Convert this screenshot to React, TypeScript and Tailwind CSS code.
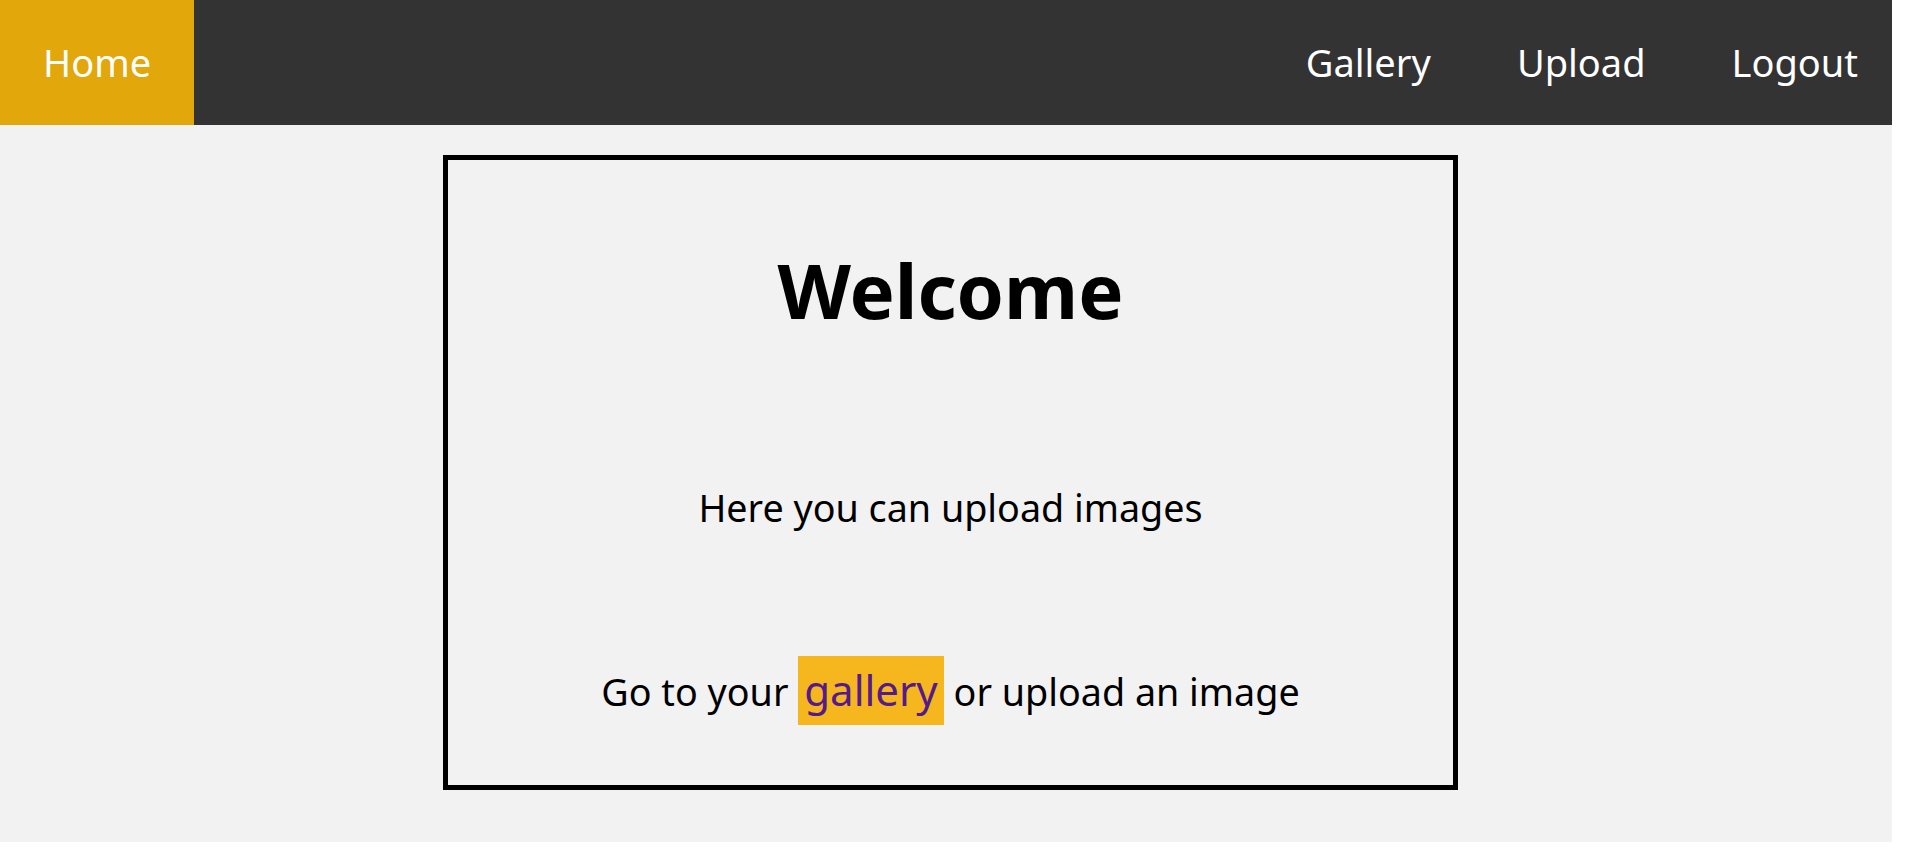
export default function App() {
  const font = { fontFamily: '"Noto Sans", "Open Sans", sans-serif' };
  return (
    <div className="w-[1911px] h-[850px] bg-white overflow-hidden">
      <div className="w-[1892px] h-[842px] overflow-hidden bg-[#f2f2f2]" style={font}>
        <div className="w-[1901px]">
          <nav className="flex h-[125px] bg-[#333333] text-white text-[38px] leading-[normal]">
            <a className="flex items-center pb-[1px] px-[43px] bg-[#e1a70b]">Home</a>
            <div className="ml-auto flex">
              <a className="flex items-center pb-[1px] px-[43px]">Gallery</a>
              <a className="flex items-center pb-[1px] px-[43px]">Upload</a>
              <a className="flex items-center pb-[1px] px-[43px]">Logout</a>
            </div>
          </nav>
          <div className="mx-auto mt-[30px] w-[1015px] h-[635px] border-[5px] border-black text-black text-center">
            <h1 className="mt-[78px] text-[76px] font-bold leading-[normal]">Welcome</h1>
            <p className="mt-[141px] text-[37.7px] leading-[normal]">Here you can upload images</p>
            <p className="mt-[123px] text-[37.7px] leading-[normal]">
              Go to your{" "}
              <a className="inline-block px-[6px] pt-[5px] pb-[7px] bg-[#f5b71d] text-[#551a8b] text-[42px] leading-[normal]">gallery</a>{" "}
              or upload an image
            </p>
          </div>
        </div>
      </div>
    </div>
  );
}
